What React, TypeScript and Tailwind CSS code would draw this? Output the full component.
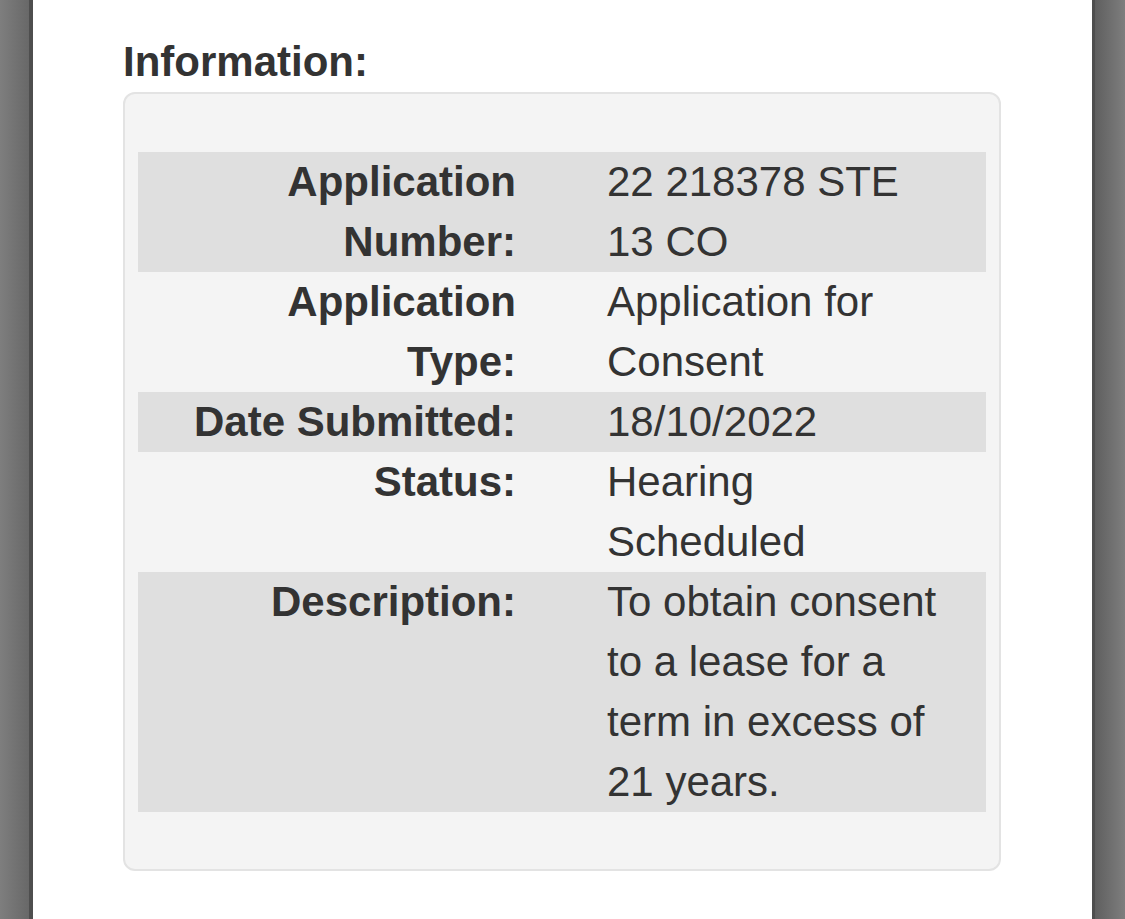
import React from "react";

const rows: { label: string; value: string; dark: boolean }[] = [
  { label: "Application Number:", value: "22 218378 STE 13 CO", dark: true },
  { label: "Application Type:", value: "Application for Consent", dark: false },
  { label: "Date Submitted:", value: "18/10/2022", dark: true },
  { label: "Status:", value: "Hearing Scheduled", dark: false },
  {
    label: "Description:",
    value: "To obtain consent to a lease for a term in excess of 21 years.",
    dark: true,
  },
];

export default function App() {
  return (
    <div
      className="flex h-[919px] w-[1125px] overflow-hidden text-[#333333]"
      style={{ fontFamily: '"Liberation Sans", Arial, Helvetica, sans-serif' }}
    >
      <div className="flex shrink-0">
        <div className="w-[29px] bg-gradient-to-r from-[#7e7e7e] to-[#686868]" />
        <div className="w-[4px] bg-[#4e4e4e]" />
      </div>
      <div className="flex-1 bg-white pt-[32px] pl-[90px] pr-[91px]">
        <h4 className="text-[42px] font-bold leading-[60px]">Information:</h4>
        <div className="rounded-[12px] border-2 border-[#e3e3e3] bg-[#f4f4f4] px-[13px] pt-[58px] pb-[57px]">
          <div className="grid grid-cols-2 text-[42px] leading-[60px]">
            {rows.map((r) => (
              <React.Fragment key={r.label}>
                <div
                  className={`px-[46px] text-right font-bold ${r.dark ? "bg-[#dfdfdf]" : ""}`}
                >
                  {r.label}
                </div>
                <div className={`px-[45px] ${r.dark ? "bg-[#dfdfdf]" : ""}`}>{r.value}</div>
              </React.Fragment>
            ))}
          </div>
        </div>
      </div>
      <div className="flex shrink-0">
        <div className="w-[3px] bg-[#4e4e4e]" />
        <div className="w-[30px] bg-gradient-to-r from-[#5f5f5f] to-[#7e7e7e]" />
      </div>
    </div>
  );
}
